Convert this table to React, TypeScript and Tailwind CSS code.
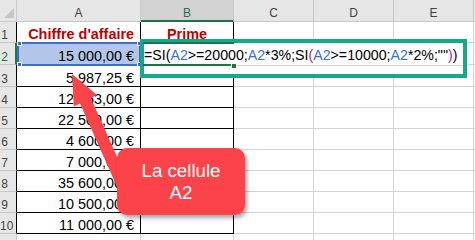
import React from "react";

type Row = { n: number; h: string; amount: string };

const rows: Row[] = [
  { n: 1, h: "h-[21px]", amount: "" },
  { n: 2, h: "h-[22px]", amount: "15 000,00 €" },
  { n: 3, h: "h-[22px]", amount: "5 987,25 €" },
  { n: 4, h: "h-[21px]", amount: "12 453,00 €" },
  { n: 5, h: "h-[21px]", amount: "22 500,00 €" },
  { n: 6, h: "h-[21px]", amount: "4 600,00 €" },
  { n: 7, h: "h-[21px]", amount: "7 000,00 €" },
  { n: 8, h: "h-[21px]", amount: "35 600,00 €" },
  { n: 9, h: "h-[21px]", amount: "10 500,00 €" },
  { n: 10, h: "h-[21px]", amount: "11 000,00 €" },
];

const font = "font-['Liberation_Sans',Arial,sans-serif]";

function ColHeader({ label, w }: { label: string; w: string }) {
  return (
    <div
      className={`${w} h-full shrink-0 flex items-end justify-center pb-[1px] bg-[#e6e6e6] border-r border-b border-[#c8c8c8] text-[12px] leading-[14px] text-[#444]`}
    >
      {label}
    </div>
  );
}

function Handle({ pos }: { pos: string }) {
  return <div className={`absolute ${pos} w-[5px] h-[5px] bg-[#3b6fc9] border border-white`} />;
}

function SheetRow({ row }: { row: Row }) {
  const active = row.n === 2;
  return (
    <div className={`flex ${row.h}`}>
      <div
        className={`w-[17px] h-full shrink-0 flex items-end bg-[#e6e6e6] border-b border-[#c8c8c8] text-[12px] leading-[14px] ${
          active ? "border-r-2 border-r-[#217346] text-[#217346]" : "border-r border-r-black text-[#444]"
        }`}
      >
        <span className="w-[9px] text-center">{row.n}</span>
      </div>
      <div
        className={`relative w-[124px] h-full shrink-0 flex items-end justify-end pr-[6px] border-r border-b border-black text-[14.4px] leading-[16px] ${
          active ? "bg-[#b4c6e7]" : ""
        } ${row.n === 1 ? "justify-center pr-0 font-bold text-[#c00000]" : "text-black"}`}
      >
        {row.n === 1 ? "Chiffre d'affaire" : row.amount}
        {active && (
          <div className="absolute left-0 -top-px w-[124px] h-[24px] border-2 border-[#3b6fc9]">
            <Handle pos="-left-[2px] -top-[3px]" />
            <Handle pos="-right-[3px] -top-[3px]" />
            <Handle pos="-left-[2px] -bottom-[3px]" />
            <Handle pos="-right-[3px] -bottom-[3px]" />
          </div>
        )}
      </div>
      <div
        className={`w-[93px] h-full shrink-0 flex items-end justify-center border-r border-b border-black text-[14.4px] leading-[16px] ${
          row.n === 1 ? "font-bold text-[#c00000]" : ""
        }`}
      >
        {row.n === 1 ? "Prime" : ""}
      </div>
      <div className="w-[80px] h-full shrink-0 border-r border-b border-[#d4d4d4]" />
      <div className="w-[80px] h-full shrink-0 border-r border-b border-[#d4d4d4]" />
      <div className="w-[80px] h-full shrink-0 border-r border-b border-[#d4d4d4]" />
      <div className="flex-1 h-full border-b border-[#d4d4d4]" />
    </div>
  );
}

function Formula() {
  const ref = "text-[#3b6fc9]";
  const nest = "text-[#b0289a]";
  return (
    <span className="whitespace-nowrap text-black">
      =SI(<span className={ref}>A2</span>&gt;=20000;<span className={ref}>A2</span>*3%;SI
      <span className={nest}>(</span>
      <span className={ref}>A2</span>&gt;=10000;<span className={ref}>A2</span>*2%;""
      <span className={nest}>)</span>)
    </span>
  );
}

export default function App() {
  return (
    <div className={`relative w-[475px] h-[240px] overflow-hidden bg-white ${font}`}>
      {/* column headers */}
      <div className="flex h-[22px]">
        <div className="relative w-[17px] h-full shrink-0 bg-[#e6e6e6] border-r border-b border-[#c8c8c8]">
          <svg className="absolute left-0 top-0" width="16" height="21" viewBox="0 0 16 21">
            <polygon points="4,18 14,18 14,8" fill="#c6c6c6" />
          </svg>
        </div>
        <ColHeader label="A" w="w-[124px]" />
        <div className="w-[93px] h-full shrink-0 flex items-end justify-center bg-[#d2d2d2] border-r border-r-[#c8c8c8] border-b-2 border-b-[#217346] text-[12px] leading-[14px] text-[#217346]">
          B
        </div>
        <ColHeader label="C" w="w-[80px]" />
        <ColHeader label="D" w="w-[80px]" />
        <ColHeader label="E" w="w-[80px]" />
        <div className="flex-1 h-full bg-[#e6e6e6] border-b border-[#c8c8c8]" />
      </div>

      {rows.map((r) => (
        <SheetRow key={r.n} row={r} />
      ))}

      {/* row 11 */}
      <div className="flex h-[10px]">
        <div className="w-[17px] h-full shrink-0 bg-[#e6e6e6] border-r border-[#c8c8c8]" />
        <div className="w-[124px] h-full shrink-0 border-r border-[#d4d4d4]" />
        <div className="w-[93px] h-full shrink-0 border-r border-[#d4d4d4]" />
        <div className="w-[80px] h-full shrink-0 border-r border-[#d4d4d4]" />
        <div className="w-[80px] h-full shrink-0 border-r border-[#d4d4d4]" />
        <div className="w-[80px] h-full shrink-0 border-r border-[#d4d4d4]" />
        <div className="flex-1 h-full" />
      </div>

      {/* formula being edited in B2, framed */}
      <div className="absolute left-[140px] top-[39px] w-[327px] h-[39px] bg-white border-4 border-[#15a98a]">
        <div className="absolute -left-px -top-px w-[91px] h-[2px] bg-[#217346]" />
        <div className="absolute -left-px top-[21px] w-[91px] h-[2px] bg-[#217346]" />
        <div className="absolute left-[89px] right-0 top-[22px] h-px bg-[#d4d4d4]" />
        <div className="absolute left-[87px] top-[20px] w-[6px] h-[6px] bg-[#217346] border border-white" />
        <div className="absolute left-0 top-[4px] text-[14.2px] leading-[16px]">
          <Formula />
        </div>
      </div>

      {/* pointer arrow */}
      <svg className="absolute left-0 top-0" width="475" height="240" viewBox="0 0 475 240">
        <polygon
          points="72,74 97,95 90.8,98.1 131,188 120,193.5 80,103.5 73.8,106.6"
          fill="#fc4349"
        />
      </svg>

      {/* callout */}
      <div className="absolute left-[117px] top-[148px] w-[128px] h-[67px] rounded-[10px] bg-[#fc4349] shadow-[2px_3px_4px_rgba(0,0,0,0.35)] flex flex-col items-center justify-center text-white text-[18.7px] leading-[22px]">
        <span>La cellule</span>
        <span>A2</span>
      </div>
    </div>
  );
}
